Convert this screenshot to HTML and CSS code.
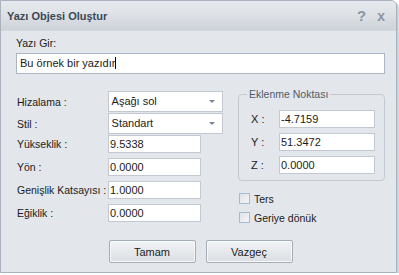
FILE: index.html
```html
<!DOCTYPE html>
<html lang="tr">
<head>
    <meta charset="UTF-8">
    <title>Yazı Objesi Oluştur</title>
    <link rel="stylesheet" href="styles.css">
</head>
<body>

    <div class="window">
        <!-- Title bar -->
        <div class="titlebar">
            <span class="title">Yazı Objesi Oluştur</span>
            <span class="title-btn">?</span>
            <span class="title-btn close">x</span>
        </div>

        <div class="content">
            <div class="text-label">Yazı Gir:</div>
            <div class="text-input">Bu örnek bir yazıdır<span class="caret"></span></div>

            <div class="columns">
                <!-- Left: properties -->
                <div class="props">
                    <div class="row sel-row">
                        <span class="lbl">Hizalama :</span>
                        <div class="select">Aşağı sol<span class="arrow"></span></div>
                    </div>
                    <div class="row sel-row">
                        <span class="lbl">Stil :</span>
                        <div class="select">Standart<span class="arrow"></span></div>
                    </div>
                    <div class="row">
                        <span class="lbl">Yükseklik :</span>
                        <div class="field">9.5338</div>
                    </div>
                    <div class="row">
                        <span class="lbl">Yön :</span>
                        <div class="field">0.0000</div>
                    </div>
                    <div class="row">
                        <span class="lbl">Genişlik Katsayısı :</span>
                        <div class="field">1.0000</div>
                    </div>
                    <div class="row">
                        <span class="lbl">Eğiklik :</span>
                        <div class="field">0.0000</div>
                    </div>
                </div>

                <!-- Right: insertion point -->
                <div class="side">
                    <div class="group">
                        <span class="legend">Eklenme Noktası</span>
                        <div class="coord"><span class="axis">X :</span><div class="field">-4.7159</div></div>
                        <div class="coord"><span class="axis">Y :</span><div class="field">51.3472</div></div>
                        <div class="coord"><span class="axis">Z :</span><div class="field">0.0000</div></div>
                    </div>
                    <label class="check"><span class="box"></span>Ters</label>
                    <label class="check"><span class="box"></span>Geriye dönük</label>
                </div>
            </div>

            <div class="buttons">
                <button class="btn">Tamam</button>
                <button class="btn">Vazgeç</button>
            </div>
        </div>
    </div>

</body>
</html>
```

FILE: styles.css
```css
body {
    margin: 0;
    background-color: #ffffff;
    font-family: "Liberation Sans", Arial, sans-serif;
    font-size: 10.5px;
    color: #1b1b1b;
}

.window {
    width: 395px;
    height: 271px;
    background-color: #e3e6ea;
    border: 1px solid #a9b2bd;
    border-top-right-radius: 6px;
    box-shadow: 1px 1px 0 #c5ccd4, 2px 2px 0 #d9dee4;
    overflow: hidden;
}

/* Title bar */
.titlebar {
    height: 29px;
    display: flex;
    align-items: center;
    padding: 0 11px 0 6px;
    background: linear-gradient(#e6e9ed, #dde1e6 50%, #cdd2d9);
    border-bottom: 1px solid #d3d8de;
}

.title {
    flex: 1;
    font-weight: bold;
    font-size: 11px;
    color: #3c4756;
}

.title-btn {
    font-size: 15px;
    font-weight: bold;
    color: #8c96a3;
    margin-left: 11px;
}

.title-btn.close {
    font-size: 14px;
}

.content {
    padding: 6px 11px 0 15px;
}

.text-label {
    height: 15px;
}

.text-input {
    height: 19px;
    line-height: 19px;
    margin-top: 1px;
    background-color: #ffffff;
    border: 1px solid #aab6c6;
    padding-left: 3px;
    font-size: 11px;
}

.caret {
    display: inline-block;
    width: 1px;
    height: 12px;
    background-color: #000000;
    vertical-align: -2px;
}

.columns {
    display: flex;
    margin-top: 5px;
}

/* Left column */
.props {
    width: 207px;
    padding-top: 12px;
    display: flex;
    flex-direction: column;
    gap: 5px;
}

.row {
    display: flex;
    align-items: center;
}

.sel-row + .row {
    margin-top: -4px;
}

.lbl {
    width: 91px;
    padding-left: 1px;
}

.select {
    position: relative;
    width: 111px;
    height: 19px;
    line-height: 19px;
    padding-left: 3px;
    background-color: #ffffff;
    border: 1px solid #c2c9d2;
    font-size: 11px;
}

.arrow {
    position: absolute;
    right: 7px;
    top: 8px;
    border-left: 3px solid transparent;
    border-right: 3px solid transparent;
    border-top: 3px solid #7a8594;
}

.field {
    width: 90px;
    height: 16px;
    line-height: 16px;
    padding-left: 1px;
    background-color: #ffffff;
    border: 1px solid #c2c9d2;
    font-size: 11px;
}

/* Right column */
.side {
    margin-left: 15px;
    padding-top: 15px;
    flex: 1;
}

.group {
    position: relative;
    height: 87px;
    border: 1px solid #c3c9d1;
    border-radius: 4px;
    padding-top: 15px;
    box-sizing: border-box;
    display: flex;
    flex-direction: column;
    gap: 5px;
}

.legend {
    position: absolute;
    top: -7px;
    left: 8px;
    padding: 0 2px;
    background-color: #e3e6ea;
    color: #4f5d6d;
}

.coord {
    display: flex;
    align-items: center;
}

.axis {
    width: 40px;
    padding-left: 12px;
    box-sizing: border-box;
    font-size: 11px;
}

.coord .field {
    width: 93px;
}

.check {
    display: flex;
    align-items: center;
    gap: 4px;
    height: 19px;
    padding-left: 1px;
}

.group + .check {
    margin-top: 8px;
}

.box {
    width: 9px;
    height: 9px;
    border: 1px solid #a7bad3;
    background: linear-gradient(135deg, #dfe2e6, #f4f5f7);
}

/* Buttons */
.buttons {
    display: flex;
    justify-content: center;
    gap: 10px;
    margin-top: 13px;
}

.btn {
    width: 87px;
    height: 23px;
    font-family: "Liberation Sans", Arial, sans-serif;
    font-size: 11px;
    color: #1b1b1b;
    border: 1px solid #a5adb7;
    border-radius: 2px;
    background: linear-gradient(#f2f3f5, #e6e9ec 50%, #dadee3);
    box-shadow: inset 0 0 0 1px #f7f8f9;
}
```
